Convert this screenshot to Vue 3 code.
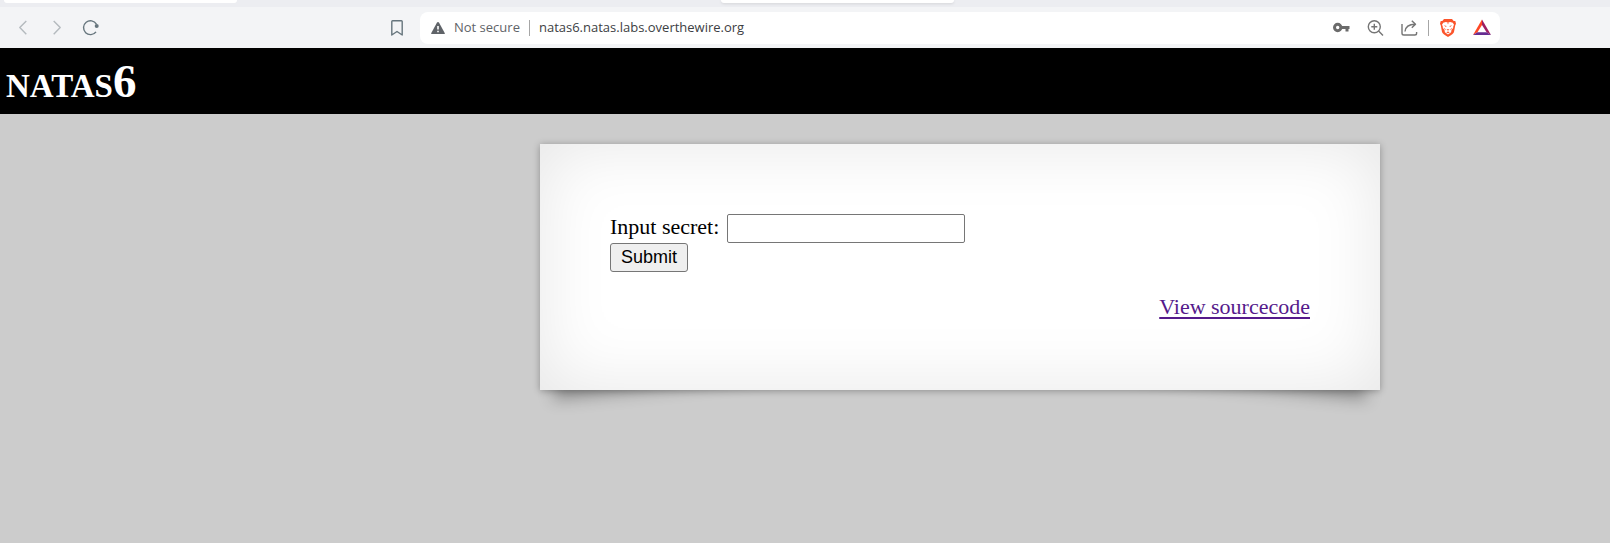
<script setup>
import { ref } from 'vue'

const address = ref('natas6.natas.labs.overthewire.org')
const secret = ref('')
</script>

<template>
  <div class="browser">
    <div class="tabs">
      <span class="tab"></span>
      <span class="tab tab-active"></span>
    </div>

    <nav class="toolbar" aria-label="Browser toolbar">
      <div class="nav">
        <button type="button" class="tool faded" aria-label="Back">
          <svg width="18" height="18" viewBox="0 0 18 18"><path d="M12.300 2 5.800 8.500l6.500 6.700" /></svg>
        </button>
        <button type="button" class="tool faded" aria-label="Forward">
          <svg width="18" height="18" viewBox="0 0 18 18"><path d="M5.700 2 12.200 8.500l-6.500 6.700" /></svg>
        </button>
        <button type="button" class="tool" aria-label="Reload">
          <svg width="18" height="18" viewBox="0 0 18 18">
            <path d="M14 12.800A6.900 6.900 0 1 1 14.400 5.200" />
            <circle class="dot" cx="14.700" cy="7" r="2" />
          </svg>
        </button>
        <button type="button" class="tool bookmark" aria-label="Bookmark">
          <svg width="18" height="18" viewBox="0 0 18 18"><path d="M3.800 2.500Q3.800 1.700 4.600 1.700H13.400Q14.200 1.700 14.200 2.500V16L9 12.500 3.800 16Z" /></svg>
        </button>
      </div>

      <div class="address">
        <svg class="warn" width="14" height="14" viewBox="0 0 14 14">
          <path fill="#5f6368" d="M7 1Q7.700 1 8.100 1.700L13.700 12Q14.200 13 13 13H1Q-.2 13 .3 12L5.900 1.700Q6.300 1 7 1Z" />
          <path stroke="#fff" stroke-width="1.600" d="M7 5v3.500M7 9.800v1.500" />
        </svg>
        <span class="security">Not secure</span>
        <span class="rule"></span>
        <input v-model="address" class="url" type="text" aria-label="Address" />
        <button type="button" class="tool" aria-label="Passwords">
          <svg width="18" height="18" viewBox="0 0 18 18">
            <circle class="key" cx="5.700" cy="8.500" r="3.200" />
            <path class="key" d="M9 8.500h8.500M15 9v3.600" />
          </svg>
        </button>
        <button type="button" class="tool" aria-label="Zoom">
          <svg class="grey" width="18" height="18" viewBox="0 0 18 18">
            <circle cx="8.300" cy="7.700" r="6" />
            <path d="M12.600 12 17 16.500M5.300 7.700h6M8.300 4.700v6" />
          </svg>
        </button>
        <button type="button" class="tool" aria-label="Share">
          <svg class="grey" width="18" height="18" viewBox="0 0 18 18">
            <path d="M2 5V14.200Q2 16 3.800 16H14.800Q16.600 16 16.600 14.200V13" />
            <path d="M5 12.500C5.500 7.500 8.500 5.200 15 5.200M11.800 1.700 15.500 5.200 11.800 8.800" />
          </svg>
        </button>
        <span class="rule rule-right"></span>
        <button type="button" class="tool shield" aria-label="Shields">
          <svg width="18" height="18" viewBox="0 0 18 18">
            <path fill="#fb542b" d="M5 0H13L14.700 1.900 16.300 2 17 4.700 16.200 6.500 15 13Q14.500 15 9 18 3.500 15 3 13L1.800 6.500 1 4.700 1.700 2 3.300 1.900Z" />
            <path fill="#fff" d="M4.200 3.700 6.800 3.100 9 3.500 11.200 3.100 13.800 3.700 15 5.700 14.300 7.300 14.100 9 12.500 11 12.100 13.300 9 15.500 5.900 13.300 5.500 11 3.900 9 3.700 7.300 3 5.700Z" />
            <path fill="#fb542b" d="M4.700 6.300 7.600 6.900 7 8.100ZM13.300 6.300 10.400 6.900 11 8.100ZM7.500 10.300H10.500L9 11.700ZM4.700 8.600 6.600 10.200 6.200 11.300ZM13.300 8.600 11.400 10.200 11.800 11.300ZM7.300 13.300 9 12.600 10.700 13.300 9 14.200ZM8.300 3.500H9.700L9 5.500Z" />
          </svg>
        </button>
        <button type="button" class="tool" aria-label="Rewards">
          <svg width="18" height="18" viewBox="0 0 18 18">
            <path fill="#ff4724" d="M9 .5V6L4.500 13.300 0 16Z" />
            <path fill="#9e1f63" d="M9 .5 18 16 13.500 13.300 9 6Z" />
            <path fill="#662d91" d="M0 16 4.500 13.300H13.500L18 16Z" />
          </svg>
        </button>
      </div>
    </nav>

    <header class="banner"><h1>natas6</h1></header>

    <main class="page">
      <section class="card">
        <form @submit.prevent>
          <div class="field">
            <label for="secret">Input secret:</label>
            <input id="secret" v-model="secret" class="secret" name="secret" type="text" />
          </div>
          <button class="submit" type="submit">Submit</button>
        </form>
        <p class="source"><a href="#source">View sourcecode</a></p>
      </section>
    </main>
  </div>
</template>

<style>
body {
  margin: 0;
  background: #ccc;
}
</style>

<style scoped>
.browser {
  display: flex;
  flex-direction: column;
  min-height: 100vh;
}
.tabs {
  display: flex;
  gap: 484px;
  height: 7px;
  padding-left: 4px;
  background: #ecedf1;
}
.tab {
  width: 233px;
  height: 3px;
  border-radius: 0 0 8px 8px;
  background: #fff;
}
.tab-active {
  box-shadow: 0 1px 3px rgba(0, 0, 0, 0.1);
}
.toolbar {
  display: flex;
  align-items: center;
  height: 41px;
  padding-right: 110px;
  background: #f3f4f6;
}
.nav {
  display: flex;
  gap: 16px;
  box-sizing: border-box;
  width: 420px;
  padding: 0 14px;
}
.tool {
  display: flex;
  flex: none;
  padding: 0;
  border: 0;
  background: none;
}
.tool svg {
  fill: none;
  stroke: #66757d;
  stroke-width: 1.400;
  stroke-linejoin: round;
}
.tool svg.grey {
  stroke: #757575;
}
.faded svg {
  stroke: #b4babe;
}
.tool .dot {
  fill: #66757d;
  stroke: none;
}
.tool .key {
  stroke: #6b6b6b;
  stroke-width: 3;
}
.tool svg [fill] {
  stroke: none;
}
.bookmark {
  margin-left: auto;
}
.address {
  display: flex;
  flex: 1;
  align-items: center;
  gap: 16px;
  box-sizing: border-box;
  height: 32px;
  padding: 0 9px 0 11px;
  border-radius: 8px;
  background: #fff;
  font-family: "Open Sans", "Noto Sans", sans-serif;
  font-size: 13px;
  line-height: 18px;
}
.warn {
  fill: none;
}
.security,
.url {
  padding: 0 0 2px;
}
.security {
  margin-left: -7px;
  color: #5f6368;
  white-space: nowrap;
}
.rule {
  width: 1px;
  height: 16px;
  margin: 0 -7px;
  background: #a6a6a6;
}
.rule-right {
  margin: 0 -6px;
}
.url {
  flex: 1;
  min-width: 0;
  border: 0;
  outline: 0;
  background: none;
  color: #3c4043;
  font: inherit;
}
.banner {
  padding: 6px;
  background: #000;
  color: #fff;
}
h1 {
  margin: 0;
  font: bold 47px/54px "Liberation Serif", "Times New Roman", serif;
  font-variant-caps: small-caps;
}
.page {
  display: grid;
  flex: 1;
  grid-template-columns: 54fr 84fr 23fr;
  align-items: start;
  padding-top: 30px;
  background: #ccc;
  font: 22px/30px "Liberation Serif", "Times New Roman", serif;
}
.card {
  position: relative;
  z-index: 0;
  grid-column: 2;
  padding: 70px;
}
.card::before,
.card::after {
  content: "";
  position: absolute;
  z-index: -2;
  bottom: 27px;
  left: 28px;
  width: 70%;
  max-width: 525px;
  height: 96px;
  box-shadow: 0 10px 16px rgba(0, 0, 0, 0.3);
  transform: skew(-15deg) rotate(-6deg);
}
.card::after {
  right: 28px;
  left: auto;
  transform: skew(15deg) rotate(6deg);
}
form::before {
  content: "";
  position: absolute;
  z-index: -1;
  inset: 0;
  background: #fff;
  box-shadow: 0 1px 7px rgba(0, 0, 0, 0.3), inset 0 0 70px rgba(0, 0, 0, 0.1);
}
.field {
  display: flex;
  gap: 8px;
  line-height: 26px;
}
.secret {
  box-sizing: border-box;
  width: 238px;
  height: 29px;
  padding: 2px;
  border: 1px solid #767676;
  border-radius: 2px;
  font: 18px "Liberation Sans", Arial, sans-serif;
}
.submit {
  display: block;
  box-sizing: border-box;
  height: 29px;
  padding: 0 10px 2px;
  border: 1px solid #767676;
  border-radius: 3px;
  background: #efefef;
  color: #000;
  font: 18px/24px "Liberation Sans", Arial, sans-serif;
}
.source {
  margin: 20px 0 -2px;
  text-align: right;
}
.source a {
  color: #551a8b;
  text-decoration-thickness: 2px;
  text-underline-offset: 3px;
}
</style>
